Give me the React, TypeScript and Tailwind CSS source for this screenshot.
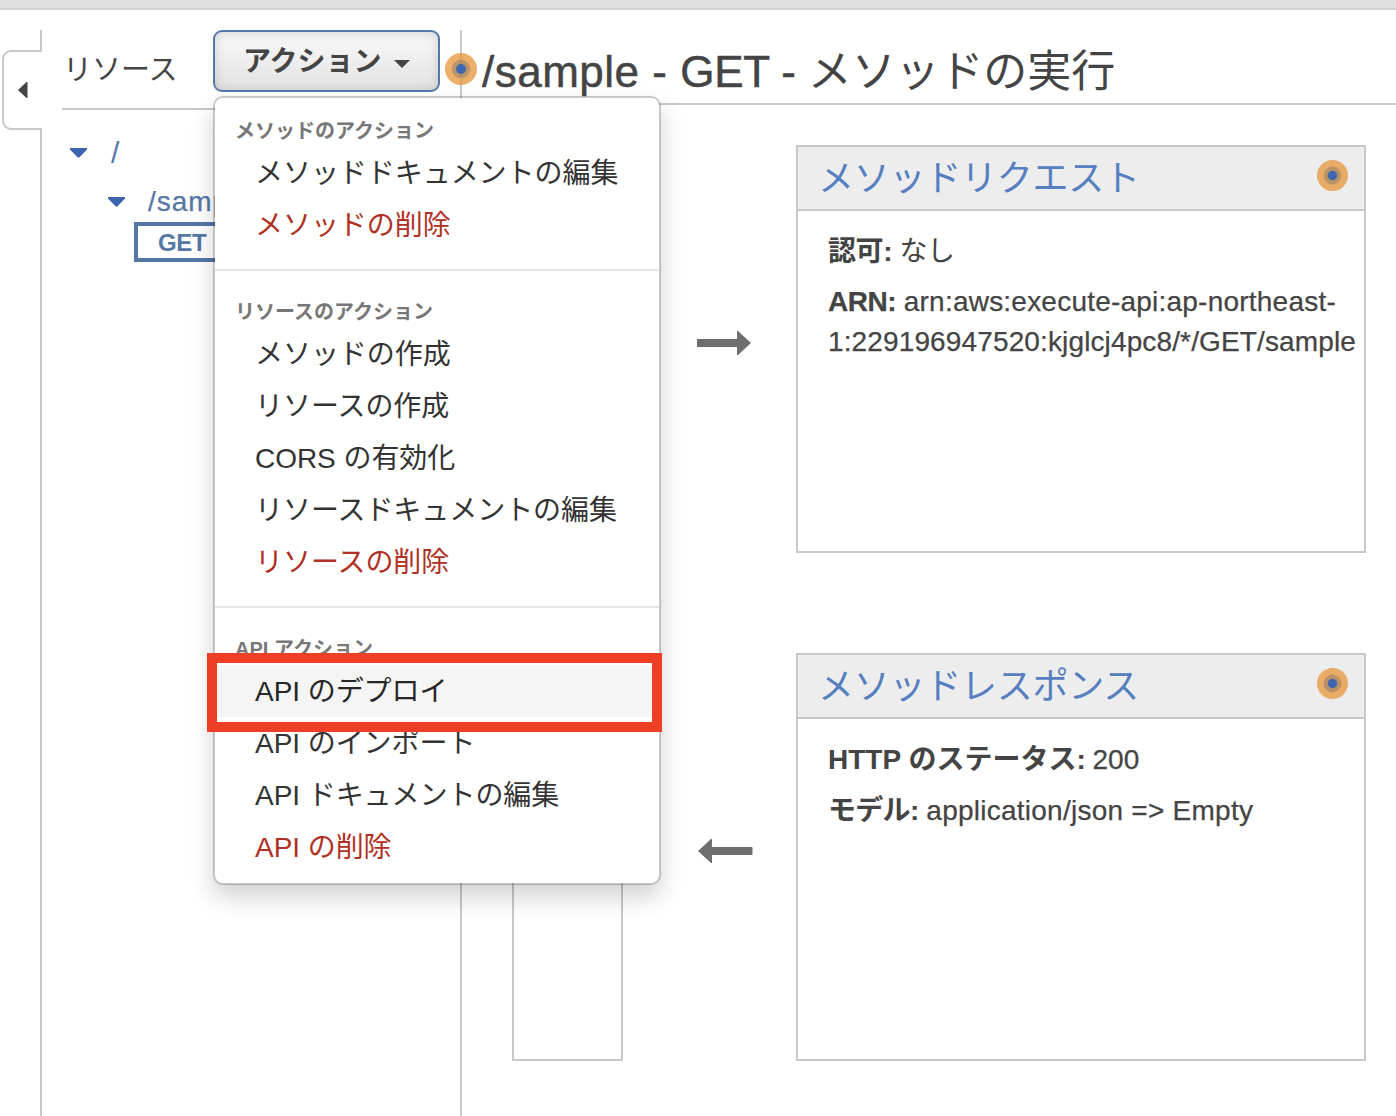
import { ReactNode } from "react";

type MenuItem = { label: string; danger?: boolean; active?: boolean };
type MenuSection = { title: string; items: MenuItem[] };

const sections: MenuSection[] = [
  {
    title: "メソッドのアクション",
    items: [{ label: "メソッドドキュメントの編集" }, { label: "メソッドの削除", danger: true }],
  },
  {
    title: "リソースのアクション",
    items: [
      { label: "メソッドの作成" },
      { label: "リソースの作成" },
      { label: "CORS の有効化" },
      { label: "リソースドキュメントの編集" },
      { label: "リソースの削除", danger: true },
    ],
  },
  {
    title: "API アクション",
    items: [
      { label: "API のデプロイ", active: true },
      { label: "API のインポート" },
      { label: "API ドキュメントの編集" },
      { label: "API の削除", danger: true },
    ],
  },
];

function Hotspot({ size }: { size: number }) {
  return (
    <svg width={size} height={size} viewBox="0 0 32 32" className="block shrink-0">
      <circle cx="16" cy="16" r="16" fill="#e69b45" fillOpacity="0.8" />
      <circle cx="16" cy="16" r="9.2" fill="#6b6b64" fillOpacity="0.38" />
      <circle cx="16" cy="16" r="4.9" fill="#3f66b0" />
    </svg>
  );
}

function Caret() {
  return (
    <svg width="17" height="10" viewBox="0 0 17 10" className="block shrink-0">
      <path d="M0 0h17v1.5L9.5 9.3q-1 .9-2 0L0 1.5z" fill="#3d64b1" />
    </svg>
  );
}

function Arrow({ left = false }: { left?: boolean }) {
  return (
    <svg width="55" height="24" viewBox="0 0 55 24" className="block" fill="#6e6e6e">
      {left ? (
        <path d="M0 12 13 0h1v8h39.500q1 0 1 1v6q0 1-1 1H14v8h-1z" />
      ) : (
        <path d="M54 12 41 0h-1v8H.5Q-.5 8-.5 9v6q0 1 1 1H40v8h1z" />
      )}
    </svg>
  );
}

function Card({ title, children }: { title: string; children: ReactNode }) {
  return (
    <section className="h-[408px] w-[570px] border-2 border-[#c8c8c8] bg-white">
      <header className="flex h-[64px] items-start justify-between border-b-2 border-[#c8c8c8] bg-[#ededed] pr-4 pl-5">
        <h2 className="pt-[2px] text-[36px] leading-[60px] tracking-[-0.25px] whitespace-nowrap text-[#557fc0]">{title}</h2>
        <div className="pt-[13px]">
          <Hotspot size={31} />
        </div>
      </header>
      <div className="pt-5 pl-[30px] text-[28px] leading-10 whitespace-nowrap text-[#444]">{children}</div>
    </section>
  );
}

function ActionMenu() {
  return (
    <div className="absolute top-[96px] left-[213px] z-10 h-[789px] w-[448px] rounded-[10px] border-2 border-black/20 bg-white bg-clip-padding shadow-[0_12px_24px_rgba(0,0,0,0.18)]">
      {sections.map((section, i) => (
        <div key={section.title} className={i === 0 ? "pb-[18px]" : "border-t-2 border-[#e5e5e5] pt-2 pb-[18px]"}>
          <div className="flex h-[49px] items-center pt-4 pl-[20px] text-[20px] leading-[30px] font-bold text-[#777]">
            {section.title}
          </div>
          {section.items.map((item) => (
            <div
              key={item.label}
              className={
                "flex h-[52px] items-center pt-[2px] pl-10 text-[28px] leading-[48px] tracking-[-0.05px] whitespace-nowrap " +
                (item.danger ? "text-[#b03024]" : item.active ? "bg-[#f5f5f5] text-[#262626]" : "text-[#333]")
              }
            >
              {item.label}
            </div>
          ))}
        </div>
      ))}
    </div>
  );
}

export default function App() {
  return (
    <div className="relative flex h-[1116px] w-[1396px] flex-col overflow-hidden bg-white font-['Liberation_Sans','Noto_Sans_CJK_JP',sans-serif] text-[#444]">
      <div className="h-[10px] shrink-0 border-b-2 border-[#d3d3d3] bg-[#e0e0e0]" />
      <div className="flex flex-1 pt-5">
        <div className="flex w-[42px] shrink-0 flex-col items-end">
          <div className="h-5 w-[2px] bg-[#c8c8c8]" />
          <div className="flex h-20 w-10 items-center rounded-l-[9px] border-2 border-r-0 border-[#c8c8c8] pl-[14px]">
            <svg width="10" height="16" viewBox="0 0 10 16" fill="#444">
              <path d="M9.500 0v16H8.500L0 8 8.500 0z" />
            </svg>
          </div>
          <div className="w-[2px] flex-1 bg-[#c8c8c8]" />
        </div>

        <aside className="w-[420px] shrink-0 border-r-2 border-[#c8c8c8] pl-5">
          <div className="flex h-20 border-b-2 border-[#c8c8c8]">
            <h2 className="w-[151px] pl-[1px] text-[29px] leading-[80px]">リソース</h2>
            <button className="flex h-[62px] w-[227px] items-center rounded-[9px] border-2 border-[#5478aa] bg-linear-to-b from-[#fafafa] to-[#e2e2e2] pt-[2px] pl-[28px] text-[28px] font-bold shadow-[inset_0_2px_12px_rgba(0,0,0,0.14)]">
              <span>アクション</span>
              <svg width="16" height="8" viewBox="0 0 16 8" className="mt-1 ml-3" fill="#444">
                <path d="M0 0h16L8 8z" />
              </svg>
            </button>
          </div>
          <div className="mt-[9px] flex h-12 items-center pt-5 pl-2 text-[28px] leading-[40px] text-[#5577a6]">
            <Caret />
            <span className="pl-[24px] text-[30px]">/</span>
          </div>
          <div className="mt-[14px] flex h-[40px] items-center pt-px pl-[46px] text-[28px] text-[#5577a6]">
            <Caret />
            <span className="pl-[23px] tracking-[1px] [-webkit-text-stroke:0.25px_#5577a6]">/sample</span>
          </div>
          <div className="mt-[1px] ml-[72px] flex h-10 w-[100px] items-center border-4 border-[#5577a6] pt-px pl-5 text-[24px] font-bold tracking-[-0.3px] text-[#5577a6]">
            GET
          </div>
        </aside>

        <main className="flex min-w-0 flex-1 flex-col">
          <div className="flex h-[75px] shrink-0 items-center border-b-2 border-[#c8c8c8]">
            <div className="-ml-[17px] pt-1">
              <Hotspot size={32} />
            </div>
            <h1 className="pt-[11px] pl-[5px] text-[44px] leading-[66px] whitespace-nowrap">
              <span className="tracking-[0.5px] [-webkit-text-stroke:0.5px_#444]">/sample - </span>
              <span className="tracking-[-0.2px] [-webkit-text-stroke:0.5px_#444]">GET - </span>
              <span className="tracking-[-0.1px]">メソッドの実行</span>
            </h1>
          </div>
          <div className="flex pt-10 pl-[50px]">
            <div className="h-[916px] w-[111px] border-2 border-[#c8c8c8]" />
            <div className="w-[173px] pl-[74px]">
              <div className="pt-[186px]">
                <Arrow />
              </div>
              <div className="pt-[484px] pl-[1px]">
                <Arrow left />
              </div>
            </div>
            <div className="flex flex-col gap-[100px]">
              <Card title="メソッドリクエスト">
                <p className="pt-px tracking-[-0.4px]">
                  <b>認可:</b> なし
                </p>
                <p className="mt-[10px] [-webkit-text-stroke:0.25px_#444]">
                  <b className="tracking-[-0.5px]">ARN:</b> <span className="tracking-[0.22px]">arn:aws:execute-api:ap-northeast-</span>
                  <br />
                  <span className="tracking-[0.13px]">1:229196947520:kjglcj4pc8/*/GET/sample</span>
                </p>
              </Card>
              <Card title="メソッドレスポンス">
                <p className="pt-px">
                  <b>HTTP のステータス:</b>
                  <span className="-ml-px [-webkit-text-stroke:0.25px_#444]"> 200</span>
                </p>
                <p className="mt-[11px]">
                  <b className="tracking-[-0.7px]">モデル:</b>{" "}
                  <span className="tracking-[0.25px] [-webkit-text-stroke:0.25px_#444]">application/json =&gt; Empty</span>
                </p>
              </Card>
            </div>
          </div>
        </main>
      </div>

      <ActionMenu />
      <div className="absolute top-[653px] left-[207px] z-20 h-[79px] w-[455px] border-[10px] border-[#ed3f26]">
        <div className="h-[2px] bg-white" />
        <div className="mt-[52px] h-[5px] bg-white" />
      </div>
    </div>
  );
}
